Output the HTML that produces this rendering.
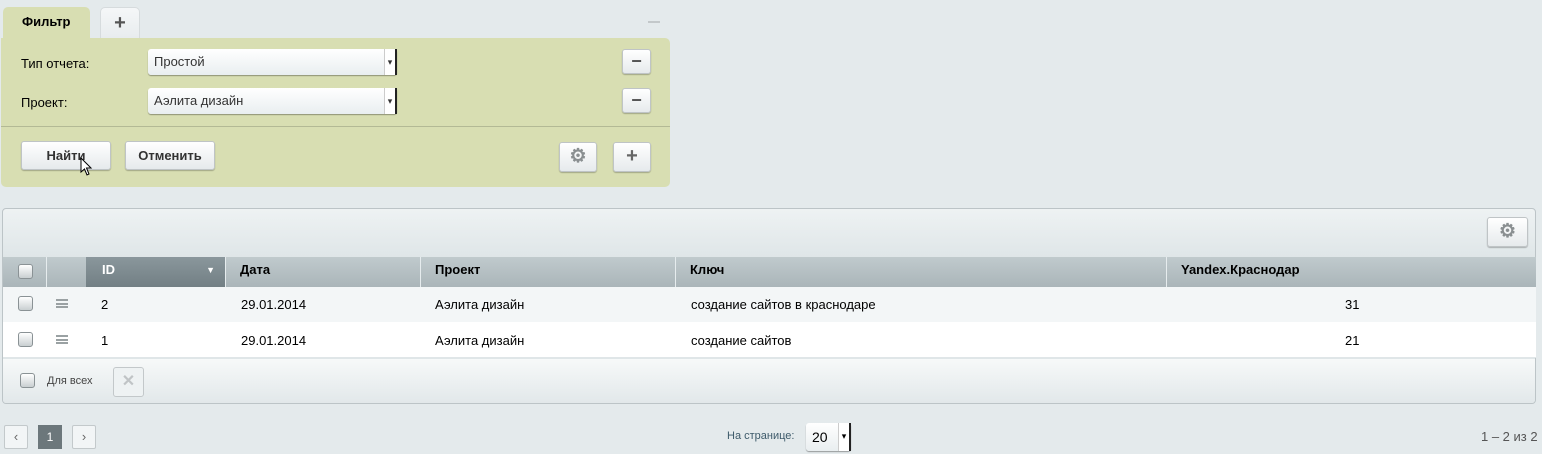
<!DOCTYPE html>
<html><head><meta charset="utf-8"><style>
*{box-sizing:border-box;margin:0;padding:0}
body{width:1542px;height:454px;background:#e4eaec;font-family:"Liberation Sans",sans-serif;font-size:13px;color:#000;position:relative;overflow:hidden}
.a{position:absolute}
.tab{background:#d8deb2;border-radius:5px 5px 0 0;font-weight:bold}
.btn{position:absolute;border:1px solid #bfc4c6;border-radius:3px;background:linear-gradient(#fff,#e6eaec);box-shadow:0 1px 1px rgba(0,0,0,.25);font-weight:bold;color:#333;text-align:center}
.sel{position:absolute;background:linear-gradient(#fff,#e9eef0);border-radius:3px;box-shadow:0 1px 1px rgba(0,0,0,.35);color:#333;padding-left:6px;line-height:26px}
.sel:after{content:"▾";position:absolute;right:0;top:0;width:10px;height:100%;border-left:1px solid #ccc;border-right:2px solid #222;font-size:9px;text-align:center;line-height:26px;background:#fff}
.cb{position:absolute;width:15px;height:15px;border:1px solid #8a9295;border-radius:3px;background:linear-gradient(#fff,#c9cfd1)}
.hd{position:absolute;top:257px;height:30px;line-height:26px;font-weight:bold;padding-left:14px;border-left:1px solid #e6ecee}
.gear{font-size:19px;color:#8a8f91}
</style></head><body>
<div class="a tab" style="left:3px;top:7px;width:87px;height:32px;line-height:30px;padding-left:19px">Фильтр</div>
<div class="a" style="left:100px;top:7px;width:40px;height:31px;background:linear-gradient(#f5f7f8,#e8ecee);border:1px solid #d6dbdd;border-bottom:none;border-radius:5px 5px 0 0;text-align:center;font-size:20px;font-weight:bold;color:#555;line-height:30px">+</div>
<div class="a" style="left:648px;top:21px;width:12px;height:2px;background:#c3c8ca"></div>
<div class="a" style="left:1px;top:38px;width:669px;height:149px;background:#d8deb2;border-radius:0 5px 5px 5px"></div>
<div class="a" style="left:21px;top:56px">Тип отчета:</div>
<div class="a" style="left:21px;top:95px">Проект:</div>
<div class="sel" style="left:148px;top:49px;width:249px;height:26px">Простой</div>
<div class="sel" style="left:148px;top:88px;width:249px;height:26px">Аэлита дизайн</div>
<div class="btn" style="left:622px;top:49px;width:29px;height:25px;font-size:18px;line-height:22px;color:#555">−</div>
<div class="btn" style="left:622px;top:88px;width:29px;height:25px;font-size:18px;line-height:22px;color:#555">−</div>
<div class="a" style="left:1px;top:126px;width:669px;height:1px;background:#b3b995"></div>
<div class="btn" style="left:21px;top:141px;width:90px;height:29px;line-height:27px">Найти</div>
<div class="btn" style="left:125px;top:141px;width:90px;height:29px;line-height:27px">Отменить</div>
<div class="btn gear" style="left:559px;top:142px;width:38px;height:30px;line-height:28px">⚙</div>
<div class="btn" style="left:613px;top:142px;width:38px;height:30px;line-height:27px;font-size:20px;color:#666">+</div>
<svg class="a" style="left:80px;top:157px" width="14" height="20"><path d="M1 1 L1 15 L4.5 12 L7 18 L9 17 L6.5 11 L11 11 Z" fill="#fff" stroke="#000" stroke-width="1"/></svg>

<div class="a" style="left:2px;top:208px;width:1534px;height:196px;border:1px solid #bcc4c7;border-radius:4px;background:linear-gradient(#eef2f3,#dfe6e8 48px)"></div>
<div class="a" style="left:3px;top:359px;width:1532px;height:44px;border-radius:0 0 3px 3px;background:linear-gradient(#f7f9f9,#e2e8ea)"></div>
<div class="btn gear" style="left:1487px;top:217px;width:41px;height:30px;line-height:28px">⚙</div>
<div class="a" style="left:3px;top:257px;width:1533px;height:30px;background:linear-gradient(#c0cacd,#aab5b9)"></div>
<div class="a" style="left:86px;top:257px;width:139px;height:30px;background:linear-gradient(#8a979c,#727f84)"></div>
<div class="cb" style="left:18px;top:264px"></div>
<div class="hd" style="left:46px;width:40px"></div>
<div class="hd" style="left:86px;width:139px;color:#fff;border-left:none;padding-left:16px">ID<span style="position:absolute;right:10px;font-size:9px">▼</span></div>
<div class="hd" style="left:225px;width:195px">Дата</div>
<div class="hd" style="left:420px;width:255px">Проект</div>
<div class="hd" style="left:675px;width:491px">Ключ</div>
<div class="hd" style="left:1166px;width:370px">Yandex.Краснодар</div>
<div class="a" style="left:3px;top:287px;width:1533px;height:35px;background:#f3f6f7"></div>
<div class="a" style="left:3px;top:322px;width:1533px;height:36px;background:#fff;border-bottom:1px solid #e0e6e8"></div>
<div class="cb" style="left:18px;top:296px"></div>
<div class="cb" style="left:18px;top:332px"></div>
<div class="a" style="left:56px;top:299px;width:12px;height:9px;border-top:2px solid #9aa1a3;border-bottom:2px solid #9aa1a3"><div style="margin-top:1.5px;height:2px;background:#9aa1a3"></div></div>
<div class="a" style="left:56px;top:335px;width:12px;height:9px;border-top:2px solid #9aa1a3;border-bottom:2px solid #9aa1a3"><div style="margin-top:1.5px;height:2px;background:#9aa1a3"></div></div>
<div class="a" style="left:101px;top:297px">2</div><div class="a" style="left:101px;top:333px">1</div>
<div class="a" style="left:241px;top:297px">29.01.2014</div><div class="a" style="left:241px;top:333px">29.01.2014</div>
<div class="a" style="left:435px;top:297px">Аэлита дизайн</div><div class="a" style="left:435px;top:333px">Аэлита дизайн</div>
<div class="a" style="left:691px;top:297px">создание сайтов в краснодаре</div><div class="a" style="left:691px;top:333px">создание сайтов</div>
<div class="a" style="left:1345px;top:297px">31</div><div class="a" style="left:1345px;top:333px">21</div>
<div class="cb" style="left:20px;top:373px"></div>
<div class="a" style="left:47px;top:375px;font-size:11px;color:#444">Для всех</div>
<div class="a" style="left:113px;top:367px;width:31px;height:30px;border:1px solid #c3c8ca;border-radius:3px;background:#eef2f3;color:#c0c4c6;text-align:center;line-height:28px;font-size:16px;font-weight:bold">✕</div>

<div class="a" style="left:4px;top:425px;width:24px;height:24px;border:1px solid #c3c9cb;border-radius:2px;background:#f2f5f6;text-align:center;line-height:21px;color:#666">‹</div>
<div class="a" style="left:38px;top:425px;width:24px;height:24px;background:#6c777b;color:#fff;text-align:center;line-height:24px;font-size:12px">1</div>
<div class="a" style="left:72px;top:425px;width:24px;height:24px;border:1px solid #c3c9cb;border-radius:2px;background:#f2f5f6;text-align:center;line-height:21px;color:#666">›</div>
<div class="a" style="left:727px;top:430px;font-size:11px;color:#3d5a6a">На странице:</div>
<div class="sel" style="left:806px;top:423px;width:45px;height:28px;font-size:14px;color:#000;line-height:28px">20</div>
<div class="a" style="left:1481px;top:429px;color:#555">1 – 2 из 2</div>
</body></html>
